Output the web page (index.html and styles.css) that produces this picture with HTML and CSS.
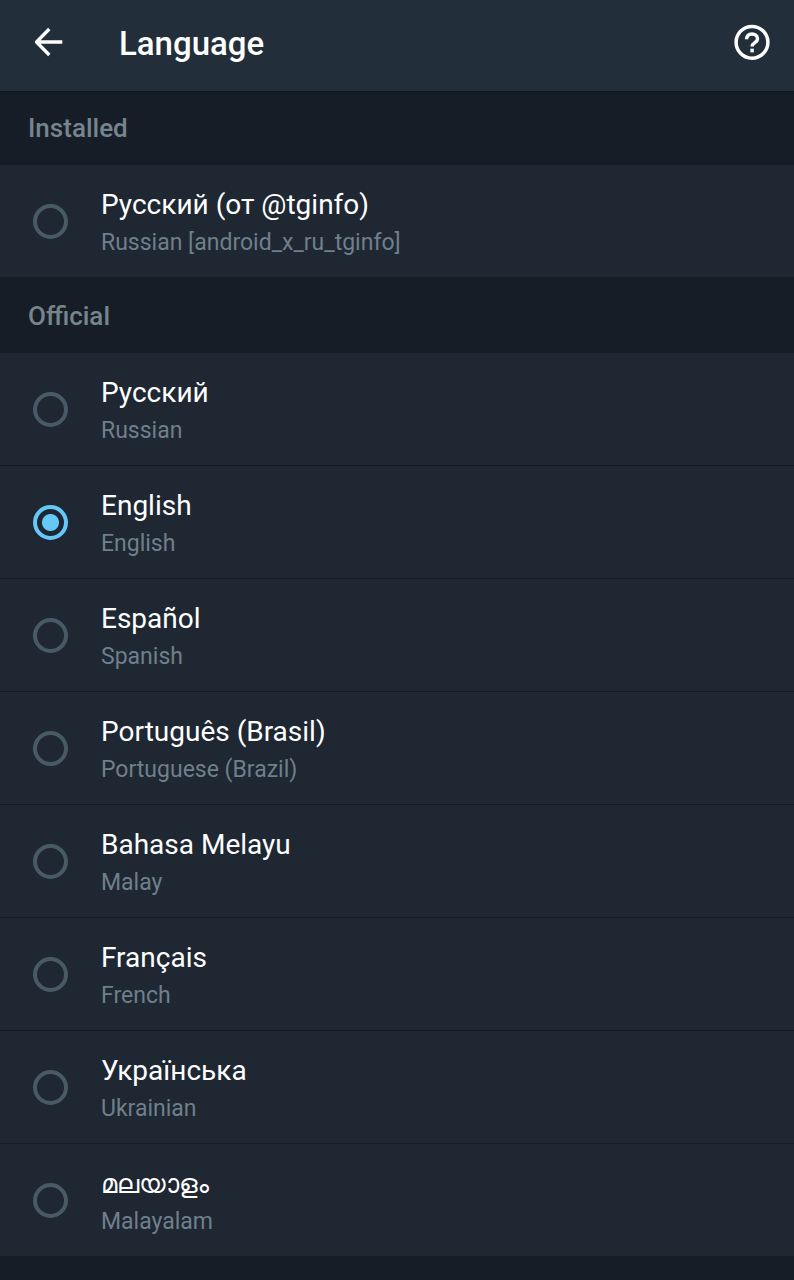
FILE: index.html
```html
<!DOCTYPE html>
<html lang="en">
<head>
    <meta charset="UTF-8">
    <meta name="viewport" content="width=device-width, initial-scale=1">
    <title>Language</title>
    <link rel="stylesheet" href="styles.css">
</head>
<body>
    <header class="header">
        <button class="icon-button" type="button" aria-label="Back">
            <svg width="36" height="36" viewBox="0 0 36 36" fill="none" stroke="#fff" stroke-width="3.300">
                <path d="M32.300 18H7M19.300 5L6.500 18l12.800 13" stroke-linejoin="round" />
            </svg>
        </button>
        <h1>Language</h1>
        <button class="icon-button" type="button" aria-label="Help">
            <svg width="36" height="36" viewBox="0 0 36 36" fill="none" stroke="#fff" stroke-width="3.500">
                <circle cx="18" cy="18.300" r="15.900" />
                <path d="M12.500 15.200c0-3.300 2.400-5.300 5.500-5.300s5.500 2.200 5.500 5c0 3.600-5.400 3.900-5.400 7.500" />
                <path d="M18.100 24.700v3.700" />
            </svg>
        </button>
    </header>

    <main>
        <h2>Installed</h2>
        <div class="list">
            <label class="row">
                <input type="radio" name="language">
                <span class="text">
                    <span class="name" lang="ru">Русский (от @tginfo)</span>
                    <span class="sub">Russian [android_x_ru_tginfo]</span>
                </span>
            </label>
        </div>

        <h2>Official</h2>
        <div class="list">
            <label class="row">
                <input type="radio" name="language">
                <span class="text">
                    <span class="name" lang="ru">Русский</span>
                    <span class="sub">Russian</span>
                </span>
            </label>
            <label class="row">
                <input type="radio" name="language" checked>
                <span class="text">
                    <span class="name">English</span>
                    <span class="sub">English</span>
                </span>
            </label>
            <label class="row">
                <input type="radio" name="language">
                <span class="text">
                    <span class="name" lang="es">Español</span>
                    <span class="sub">Spanish</span>
                </span>
            </label>
            <label class="row">
                <input type="radio" name="language">
                <span class="text">
                    <span class="name" lang="pt-BR">Português (Brasil)</span>
                    <span class="sub">Portuguese (Brazil)</span>
                </span>
            </label>
            <label class="row">
                <input type="radio" name="language">
                <span class="text">
                    <span class="name" lang="ms">Bahasa Melayu</span>
                    <span class="sub">Malay</span>
                </span>
            </label>
            <label class="row">
                <input type="radio" name="language">
                <span class="text">
                    <span class="name" lang="fr">Français</span>
                    <span class="sub">French</span>
                </span>
            </label>
            <label class="row">
                <input type="radio" name="language">
                <span class="text">
                    <span class="name" lang="uk">Українська</span>
                    <span class="sub">Ukrainian</span>
                </span>
            </label>
            <label class="row">
                <input type="radio" name="language">
                <span class="text">
                    <span class="name" lang="ml">മലയാളം</span>
                    <span class="sub">Malayalam</span>
                </span>
            </label>
        </div>
    </main>
</body>
</html>
```
FILE: styles.css
```css
* {
    box-sizing: border-box;
}

body {
    margin: 0;
    background-color: #161d26;
    font-family: Roboto, "Noto Sans", sans-serif;
    color: white;
}

.header {
    display: flex;
    align-items: center;
    padding: 20px 24px 27px 30px;
    background-color: #232e3b;
    box-shadow: 0 1px 3px #10161d;
}

.icon-button {
    display: flex;
    padding: 4px 0;
    border: none;
    background: none;
    cursor: pointer;
}

h1 {
    flex: 1;
    margin: 0 0 0 53px;
    padding-top: 4px;
    font-size: 33px;
    font-weight: 500;
    line-height: 40px;
}

h2 {
    margin: 0;
    padding: 21px 28px;
    font-size: 26px;
    font-weight: 500;
    line-height: 32px;
    color: #76858d;
}

.list + h2 {
    padding-top: 23px;
}

.list {
    background-color: #1e2732;
}

.row {
    display: flex;
    align-items: center;
    gap: 33px;
    padding: 17px 33px;
    cursor: pointer;
}

.row + .row {
    border-top: 1px solid #151c24;
}

.row input {
    appearance: none;
    flex: none;
    width: 35px;
    height: 35px;
    margin: 0;
    border: 4px solid #495a67;
    border-radius: 50%;
}

.row input:checked {
    border-color: #64c8f9;
    background: radial-gradient(circle, #64c8f9 8px, transparent 9px);
}

.text {
    display: flex;
    flex-direction: column;
    gap: 3px;
    padding-top: 5px;
}

.name {
    font-size: 28px;
    line-height: 36px;
}

.name:lang(ml) {
    font-size: 26px;
}

.sub {
    font-size: 23px;
    line-height: 34px;
    color: #6f7f8b;
}
```
